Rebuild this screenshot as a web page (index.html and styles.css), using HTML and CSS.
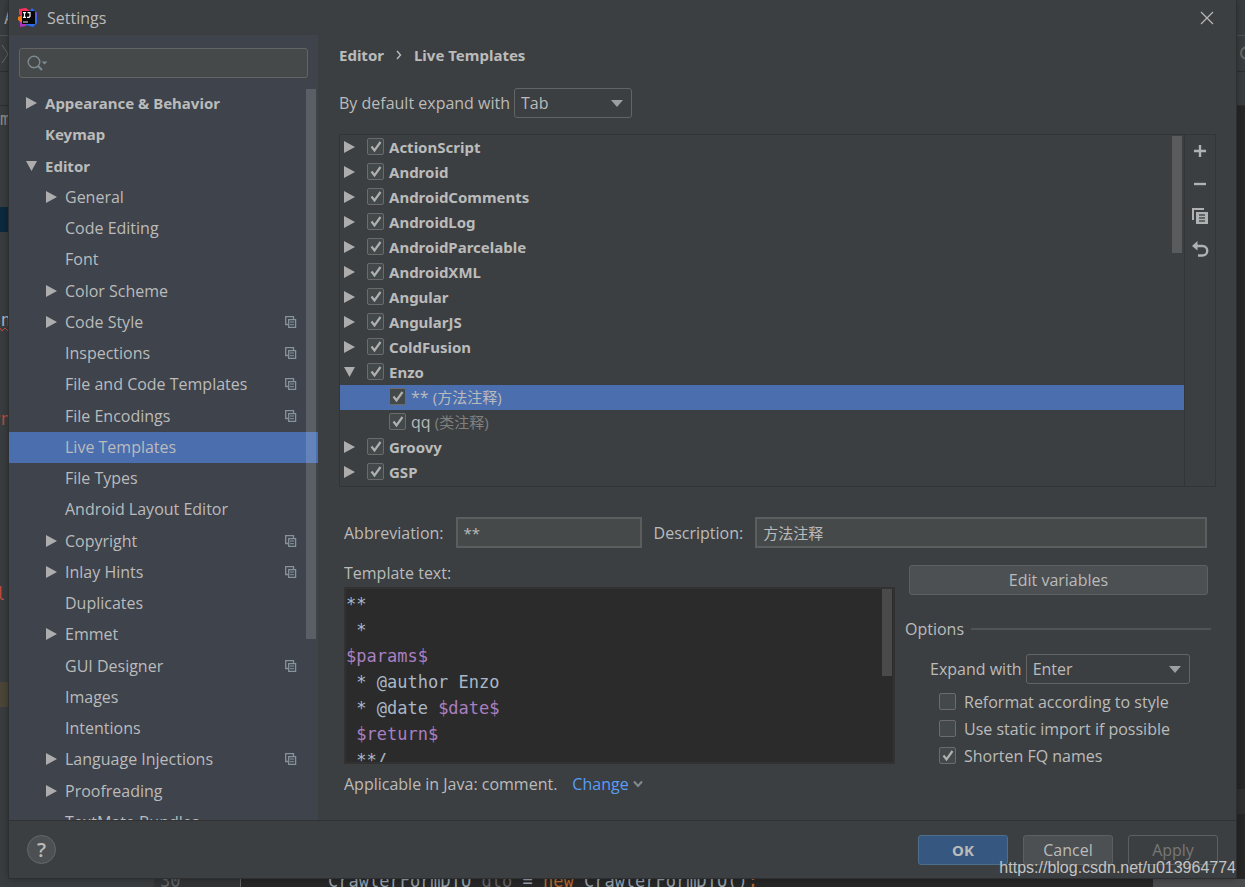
FILE: index.html
```html
<!DOCTYPE html>
<html lang="en">
<head>
<meta charset="utf-8">
<title>Settings</title>
<link rel="stylesheet" href="styles.css">
</head>
<body>
<svg class="defs" aria-hidden="true">
  <symbol id="right" viewBox="0 0 12 12"><path d="M0 0L11 6L0 12z" fill="#adadad"/></symbol>
  <symbol id="down" viewBox="0 0 12 12"><path d="M0 1H11L5.500 11z" fill="#adadad"/></symbol>
  <symbol id="scope" viewBox="0 0 12 12"><path d="M3 8.500H.7V.7H8.500V3M3.700 3.700H10.600V11.300H3.700z" fill="none" stroke="#87939a" stroke-width="1.300"/><path d="M5 6h4M5 8.700h4" stroke="#87939a"/></symbol>
</svg>

<div class="backdrop" aria-hidden="true">
  <div class="bar top"></div>
  <div class="bar middle"></div>
  <div class="bar low"></div>
  <div class="project"></div>
  <div class="mark blue"></div>
  <div class="mark tan"></div>
  <div class="mark dark"></div>
  <span class="peek menu">A</span>
  <svg class="peek chevron" width="9" height="20" viewBox="0 0 9 20"><path d="M2 1L8 10L2 19" fill="none" stroke="#65686a"/></svg>
  <svg class="peek ring" width="5" height="14" viewBox="0 0 5 14"><circle cx="7" cy="7" r="6" fill="none" stroke="#65686a" stroke-width="2"/></svg>
  <span class="peek m">m</span>
  <span class="peek on"><span><b>o</b>n</span></span>
  <svg class="peek wave" width="9" height="5" viewBox="0 0 9 5"><path d="M0 1L2 4L5 1L8 4" fill="none" stroke="#bc4b3d"/></svg>
  <span class="peek rn"><span>rn</span></span>
  <span class="peek l"><span>l</span></span>
  <div class="codeline"><span class="number">30</span><code>CrawlerFormDTO <i>dto</i> = <b>new</b> CrawlerFormDTO()<b>;</b></code></div>
  <div class="status"></div>
</div>

<main class="dialog">
  <header class="titlebar">
    <svg width="20" height="20" viewBox="0 0 20 20">
      <path d="M1 1L8 0L12 3L8 15L2 16L1 10L3 8L1 6z" fill="#fe315d"/>
      <path d="M0 9L5 7V15L0 12z" fill="#f97a12"/>
      <path d="M2 14L9 14L8 18L2 19z" fill="#b131c5"/>
      <path d="M11 4L14 0L19 5V15L15 19L8 17z" fill="#2f69ed"/>
      <path d="M16 3L19 5L18 12L15 7z" fill="#7650dc"/>
      <path d="M4 3H17V16H4z" fill="#080808"/>
      <path d="M5 4.700H8M6.500 4.700V9.300M5 9.300H8M9.500 4.700H12V8.500L11 9.300H9" fill="none" stroke="#fff" stroke-width="1.200"/>
      <path d="M5 14H10" stroke="#999" stroke-width="1.500"/>
    </svg>
    <h1>Settings</h1>
    <button class="close" aria-label="Close"><svg width="14" height="14" viewBox="0 0 14 14"><path d="M1 1L13 13M13 1L1 13" stroke="#b8b8b8" stroke-width="1.200"/></svg></button>
  </header>

  <div class="body">
    <nav class="sidebar" aria-label="Settings sections">
      <div class="search">
        <svg width="22" height="16" viewBox="0 0 22 16"><circle cx="7" cy="7" r="5.800" fill="none" stroke="#7d8b91" stroke-width="1.400"/><path d="M11 11L15 15" stroke="#7d8b91" stroke-width="2"/><path d="M14.500 6.500H20.500L17.500 9.500z" fill="#7d8b91"/></svg>
        <input type="text" aria-label="Search settings">
      </div>
      <div class="tree-view">
        <ul class="tree">
          <li class="top-item"><svg class="arrow"><use href="#right"/></svg><a href="#">Appearance &amp; Behavior</a></li>
          <li class="top-item"><a href="#">Keymap</a></li>
          <li class="top-item"><svg class="arrow"><use href="#down"/></svg><a href="#">Editor</a></li>
          <li><svg class="arrow"><use href="#right"/></svg><a href="#">General</a></li>
          <li><a href="#">Code Editing</a></li>
          <li><a href="#">Font</a></li>
          <li><svg class="arrow"><use href="#right"/></svg><a href="#">Color Scheme</a></li>
          <li><svg class="arrow"><use href="#right"/></svg><a href="#">Code Style</a><svg class="scope"><use href="#scope"/></svg></li>
          <li><a href="#">Inspections</a><svg class="scope"><use href="#scope"/></svg></li>
          <li><a href="#">File and Code Templates</a><svg class="scope"><use href="#scope"/></svg></li>
          <li><a href="#">File Encodings</a><svg class="scope"><use href="#scope"/></svg></li>
          <li class="selected"><a href="#" aria-current="page">Live Templates</a></li>
          <li><a href="#">File Types</a></li>
          <li><a href="#">Android Layout Editor</a></li>
          <li><svg class="arrow"><use href="#right"/></svg><a href="#">Copyright</a><svg class="scope"><use href="#scope"/></svg></li>
          <li><svg class="arrow"><use href="#right"/></svg><a href="#">Inlay Hints</a><svg class="scope"><use href="#scope"/></svg></li>
          <li><a href="#">Duplicates</a></li>
          <li><svg class="arrow"><use href="#right"/></svg><a href="#">Emmet</a></li>
          <li><a href="#">GUI Designer</a><svg class="scope"><use href="#scope"/></svg></li>
          <li><a href="#">Images</a></li>
          <li><a href="#">Intentions</a></li>
          <li><svg class="arrow"><use href="#right"/></svg><a href="#">Language Injections</a><svg class="scope"><use href="#scope"/></svg></li>
          <li><svg class="arrow"><use href="#right"/></svg><a href="#">Proofreading</a></li>
          <li><a href="#">TextMate Bundles</a></li>
        </ul>
        <div class="thumb side-thumb"></div>
      </div>
    </nav>

    <section class="content">
      <div class="crumbs"><span>Editor</span><svg width="6" height="10" viewBox="0 0 6 10"><path d="M1 1L4.500 5L1 9" fill="none" stroke="#bbb" stroke-width="1.400"/></svg><span>Live Templates</span></div>
      <div class="default-row">
        <label for="default-key">By default expand with</label>
        <select id="default-key"><option>Tab</option><option>Enter</option><option>Space</option></select>
      </div>

      <div class="templates">
        <div class="list-view">
          <ul class="list">
            <li><svg class="arrow"><use href="#right"/></svg><label><input type="checkbox" checked>ActionScript</label></li>
            <li><svg class="arrow"><use href="#right"/></svg><label><input type="checkbox" checked>Android</label></li>
            <li><svg class="arrow"><use href="#right"/></svg><label><input type="checkbox" checked>AndroidComments</label></li>
            <li><svg class="arrow"><use href="#right"/></svg><label><input type="checkbox" checked>AndroidLog</label></li>
            <li><svg class="arrow"><use href="#right"/></svg><label><input type="checkbox" checked>AndroidParcelable</label></li>
            <li><svg class="arrow"><use href="#right"/></svg><label><input type="checkbox" checked>AndroidXML</label></li>
            <li><svg class="arrow"><use href="#right"/></svg><label><input type="checkbox" checked>Angular</label></li>
            <li><svg class="arrow"><use href="#right"/></svg><label><input type="checkbox" checked>AngularJS</label></li>
            <li><svg class="arrow"><use href="#right"/></svg><label><input type="checkbox" checked>ColdFusion</label></li>
            <li><svg class="arrow"><use href="#down"/></svg><label><input type="checkbox" checked>Enzo</label></li>
            <li class="child selected"><label><input type="checkbox" checked><span>** <span class="note">(方法注释)</span></span></label></li>
            <li class="child"><label><input type="checkbox" checked><span>qq <span class="note">(类注释)</span></span></label></li>
            <li><svg class="arrow"><use href="#right"/></svg><label><input type="checkbox" checked>Groovy</label></li>
            <li><svg class="arrow"><use href="#right"/></svg><label><input type="checkbox" checked>GSP</label></li>
          </ul>
          <div class="thumb list-thumb"></div>
        </div>
        <div class="tools">
          <button aria-label="Add"><svg width="18" height="18" viewBox="0 0 18 18"><path d="M9 3V15M3 9H15" stroke="#afb1b3" stroke-width="2.400"/></svg></button>
          <button aria-label="Remove"><svg width="18" height="18" viewBox="0 0 18 18"><path d="M3 9H15" stroke="#afb1b3" stroke-width="2.400"/></svg></button>
          <button aria-label="Duplicate"><svg width="18" height="18" viewBox="0 0 18 18"><path d="M2 12V1H13" fill="none" stroke="#afb1b3" stroke-width="2"/><path d="M5 4H17V16H5z" fill="#afb1b3"/><path d="M8 7H14M8 10H14M8 13H14" stroke="#4a4d4f" stroke-width="1.300"/></svg></button>
          <button aria-label="Revert"><svg width="18" height="18" viewBox="0 0 18 18"><path d="M6 5H11.500A4.700 4.700 0 0 1 11.500 14.500H7" fill="none" stroke="#afb1b3" stroke-width="2.400"/><path d="M1 5L6.500 0V9.500z" fill="#afb1b3"/></svg></button>
        </div>
      </div>

      <div class="fields">
        <label for="abbr">Abbreviation:</label>
        <input id="abbr" class="abbr" type="text" value="**">
        <label for="desc">Description:</label>
        <input id="desc" class="desc" type="text" value="方法注释">
      </div>

      <div class="details">
        <div class="editor-col">
          <span id="text-label" class="text-label">Template text:</span>
          <div class="editor">
            <pre contenteditable="true" spellcheck="false" role="textbox" aria-multiline="true" aria-labelledby="text-label">**
 *
<em>$params$</em>
 * @author Enzo
 * @date <em>$date$</em>
 <em>$return$</em>
 **/</pre>
            <div class="thumb editor-thumb"></div>
          </div>
          <div class="context"><span>Applicable in Java: comment.</span><a href="#">Change<svg width="10" height="8" viewBox="0 0 10 8"><path d="M1 1.500L5 6L9 1.500" fill="none" stroke="#7f8b91" stroke-width="2"/></svg></a></div>
        </div>
        <div class="options-col">
          <button class="button edit">Edit variables</button>
          <fieldset>
            <legend>Options</legend>
            <div class="expand"><label for="expand-key">Expand with</label><select id="expand-key"><option>Enter</option><option>Tab</option></select></div>
            <label class="check"><input type="checkbox">Reformat according to style</label>
            <label class="check"><input type="checkbox">Use static import if possible</label>
            <label class="check"><input type="checkbox" checked>Shorten FQ names</label>
          </fieldset>
        </div>
      </div>
    </section>
  </div>

  <footer class="actions">
    <button class="help" aria-label="Help">?</button>
    <button class="button primary">OK</button>
    <button class="button">Cancel</button>
    <button class="button" disabled>Apply</button>
  </footer>
</main>
<div class="watermark">https://blog.csdn.net/u013964774</div>
</body>
</html>
```
FILE: styles.css
```css
* { box-sizing: border-box; }

body {
  margin: 0;
  min-height: 100vh;
  display: flex;
  position: relative;
  overflow: hidden;
  padding: 0 9px 9px;
  background: #272727;
  color: #bbbbbb;
  font: 16px/20px "Open Sans", "Noto Sans CJK SC", sans-serif;
}

ul { list-style: none; margin: 0; padding: 0; }
button, input, select { font: inherit; color: inherit; }
a { color: inherit; text-decoration: none; }
svg { flex: none; display: block; }
.defs { position: absolute; width: 0; height: 0; }
.arrow, .scope { width: 12px; height: 12px; }

/* Editor window behind the dialog */
.backdrop { position: absolute; inset: 0; overflow: hidden; font: 17px/26px "DejaVu Sans Mono", monospace; }
.bar { position: absolute; left: 0; right: 0; background: #3a3d3f; }
.top { top: 0; height: 36px; border-bottom: 1px solid #505355; }
.middle { top: 36px; height: 36px; border-bottom: 1px solid #2c2e2f; }
.low { top: 72px; height: 34px; border-bottom: 1px solid #2c2e2f; }
.project { position: absolute; left: 0; top: 106px; bottom: 0; width: 154px; background: #3a3d3f; }
.mark { position: absolute; height: 25px; width: 9px; }
.blue { left: 0; top: 207px; background: #0d293e; }
.tan { left: 0; top: 682px; background: #4c4638; }
.dark { right: 0; top: 789px; background: #303030; }
.peek { position: absolute; left: 0; width: 9px; overflow: hidden; white-space: nowrap; color: #888b8d; }
.menu { top: 5px; left: 4px; width: 5px; color: #a5a7a9; }
.chevron { top: 44px; }
.ring { top: 46px; left: auto; right: 0; width: 5px; }
.m { top: 106px; }
.on, .rn, .l { display: flex; justify-content: flex-end; color: #bc4b3d; }
.on { top: 307px; color: #a9b7c6; }
.on b { color: #bc4b3d; font-weight: 400; }
.on span, .rn span { margin-right: -2px; }
.wave { top: 327px; }
.rn { top: 406px; }
.l { top: 581px; width: 4px; }
.l span { margin-right: -2px; }
.codeline { position: absolute; left: 154px; right: 0; bottom: -7px; display: flex; color: #96a2ae; }
.number { width: 87px; padding-left: 6px; color: #606366; background: #313335; border-right: 1px solid #606366; }
.codeline code { font: inherit; padding-left: 87px; }
.codeline i { font-style: normal; color: #636363; }
.codeline b { font-weight: 400; color: #b66a2e; }
.status { position: absolute; right: 0; bottom: 0; width: 92px; height: 8px; background: #4a4c4d; }

/* Dialog */
.dialog {
  position: relative;
  flex: 1;
  min-width: 0;
  display: flex;
  flex-direction: column;
  background: #3c3f41;
  box-shadow: 0 0 0 1px #2d2f30, 0 0 8px rgba(0, 0, 0, .4);
}
.titlebar { height: 35px; display: flex; align-items: center; gap: 9px; padding: 0 22px 0 9px; }
.titlebar h1 { flex: 1; margin: 0; font-size: 16px; font-weight: 400; }
.close { padding: 0; border: 0; background: none; }
.body { flex: 1; min-height: 0; display: flex; }

.crumbs, .tree .top-item, .list li, .primary { font-family: "Noto Sans", sans-serif; font-size: 15px; font-weight: 700; }

.sidebar { width: 309px; display: flex; flex-direction: column; background: #3e434c; }
.search {
  height: 30px;
  margin: 13px 10px 9px;
  padding-left: 7px;
  display: flex;
  align-items: center;
  border: 1px solid #646464;
  border-radius: 3px;
  background: #45494a;
}
.search input { flex: 1; min-width: 0; border: 0; background: none; outline: 0; }
.tree-view { position: relative; flex: 1 1 0; min-height: 0; overflow: hidden; }
.tree { display: grid; grid-auto-rows: 1fr; height: 751px; padding-top: 1px; }
.tree li { display: grid; grid-template-columns: 19px 1fr 12px; align-items: center; padding: 0 21px 1px 37px; }
.tree li.top-item { padding-left: 17px; }
.tree a { grid-column: 2; grid-row: 1; white-space: nowrap; }
.tree .arrow { grid-column: 1; grid-row: 1; }
.tree .scope { grid-column: 3; grid-row: 1; }
.selected { background: #4b6eaf; }
.thumb { position: absolute; width: 10px; background: rgba(255, 255, 255, .15); }
.side-thumb { top: 2px; right: 2px; height: 550px; }

.content { flex: 1; min-width: 0; padding: 10px 20px 0 21px; }
.crumbs { display: flex; align-items: center; gap: 12px; }
.default-row { display: flex; align-items: center; gap: 4px; margin: 23px 0 16px; }
select {
  appearance: none;
  height: 30px;
  width: 118px;
  padding: 0 6px;
  border: 1px solid #646464;
  border-radius: 3px;
  background: #3c3f41 url("data:image/svg+xml,%3Csvg xmlns='http://www.w3.org/2000/svg' width='12' height='7'%3E%3Cpath d='M0 0H12L6 7z' fill='%239c9ea0'/%3E%3C/svg%3E") no-repeat right 8px center;
}

.templates { display: flex; border: 1px solid #323435; }
.list-view { position: relative; flex: 1; min-width: 0; padding-bottom: 1px; }
.list li { height: 25px; display: flex; align-items: center; padding: 0 0 2px 4px; }
.list .arrow { margin-right: 11px; }
.list label { display: flex; align-items: center; gap: 5px; }
.list .child { padding-left: 49px; font-family: "Open Sans", "Noto Sans CJK SC", sans-serif; font-size: 16px; font-weight: 400; }
.note { color: #808080; font-size: 15px; }
.selected .note { color: #bbbbbb; }
.list-thumb { top: 1px; right: 2px; height: 117px; }
.tools { width: 31px; padding-top: 7px; display: flex; flex-direction: column; gap: 15px; align-items: center; border-left: 1px solid #323435; }
.tools button { padding: 0; border: 0; background: none; }

input[type="checkbox"] {
  appearance: none;
  flex: none;
  width: 17px;
  height: 17px;
  margin: 0;
  border: 1px solid #6b6b6b;
  border-radius: 2px;
  background: #43494a;
}
input[type="checkbox"]:checked {
  background-image: url("data:image/svg+xml,%3Csvg xmlns='http://www.w3.org/2000/svg' width='15' height='15'%3E%3Cpath d='M3.500 7.500L6.500 11.500L12.500 3' fill='none' stroke='%23b0b0b0' stroke-width='2.200'/%3E%3C/svg%3E");
}

.fields { display: flex; align-items: center; gap: 12px; padding: 0 9px 0 5px; margin-top: 30px; }
.fields input { height: 31px; padding: 0 6px; border: 2px solid #5b5e5f; background: #45494a; outline: 0; font-size: 15px; }
.abbr { width: 186px; }
.desc { flex: 1; min-width: 0; }

.details { display: grid; grid-template-columns: 1fr 306px; gap: 10px; padding: 0 5px; margin-top: 15px; }
.editor-col { min-width: 0; }
.text-label { display: block; }
.editor { position: relative; height: 177px; margin: 4px 0 10px; overflow: hidden; border: 2px solid #323232; background: #2b2b2b; }
.editor pre { margin: 0; padding-top: 2px; color: #a9b7c6; font: 17px/26px "DejaVu Sans Mono", monospace; outline: 0; }
.editor em { font-style: normal; color: #a97fc0; }
.editor-thumb { top: 0; right: 1px; height: 87px; }
.context { display: flex; gap: 15px; }
.context a { display: flex; align-items: center; gap: 4px; color: #589df6; }

.button { height: 30px; width: 90px; padding: 0; border: 1px solid #5e6060; border-radius: 3px; background: #4c5052; }
.edit { display: block; width: 299px; margin: 2px 0 0 4px; }
.options-col { margin-top: -10px; padding-top: 10px; }
fieldset { margin: 24px 0 0; padding: 0; border: 0; min-width: 0; }
legend { display: flex; align-items: center; gap: 7px; width: 100%; padding: 0; }
legend::after { content: ""; flex: 1; height: 2px; background: #515456; }
.expand { display: flex; align-items: center; gap: 4px; padding-left: 25px; margin: 15px 0 4px; }
.expand select { width: 164px; }
.check { display: flex; align-items: center; gap: 8px; height: 27px; padding-left: 34px; }

.actions { height: 58px; display: flex; align-items: center; gap: 15px; padding: 0 18px; border-top: 1px solid #323232; }
.help { width: 29px; height: 29px; margin-right: auto; padding: 0; border: 1px solid #65686a; border-radius: 50%; background: #4c5052; font-size: 20px; font-weight: 600; }
.primary { background: #365880; border-color: #4c708c; }
.button:disabled { background: none; color: #777777; }

.watermark { position: absolute; right: 9px; bottom: 9px; color: #c4c4c4; font: 16px/20px "Liberation Sans", sans-serif; }
```
